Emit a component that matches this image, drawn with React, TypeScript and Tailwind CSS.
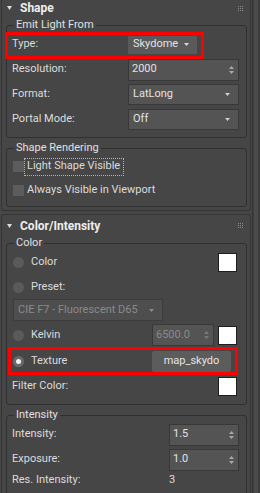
import React from 'react';
import { clsx } from 'clsx';

const Tri = ({ className = '', w = 5, h = 3 }: { className?: string; w?: number; h?: number }) => (
  <svg width={w} height={h} viewBox={`0 0 ${w} ${h}`} className={className}>
    <path d={`M0 0H${w}L${w / 2} ${h}Z`} fill="currentColor" />
  </svg>
);

const SpinArrows = ({ dim = false }: { dim?: boolean }) => (
  <svg width="5" height="8" viewBox="0 0 5 8" className={dim ? 'text-[#7a7a7a]' : 'text-[#a8a8a8]'}>
    <path d="M2.5 0L5 3H0Z M0 5H5L2.5 8Z" fill="currentColor" />
  </svg>
);

const Grip = () => (
  <svg width="5" height="5" viewBox="0 0 5 5" className="text-[#8c8c8c]">
    {[0, 2, 4].flatMap((x) =>
      [0, 2, 4].map((y) => <rect key={`${x}-${y}`} x={x} y={y} width="1" height="1" fill="currentColor" />)
    )}
  </svg>
);

const Spinner = ({ value, className, disabled = false }: { value: string; className?: string; disabled?: boolean }) => (
  <div className={clsx('flex h-[22px] items-center border border-[#383838] bg-[#545454] pl-[3px] pr-[4px]', className)}>
    <span className={clsx('flex-1', disabled ? 'text-[#8a8a8a]' : 'text-[#e2e2e2]')}>{value}</span>
    <SpinArrows dim={disabled} />
  </div>
);

const Dropdown = ({ value, className }: { value: string; className?: string }) => (
  <div className={clsx('flex h-[21px] items-center border border-[#383838] bg-[#545454] pl-[4px] pr-[8px]', className)}>
    <span className="flex-1 text-[#e2e2e2]">{value}</span>
    <Tri className="text-[#cfcfcf]" />
  </div>
);

const Swatch = () => <div className="mr-[2px] h-[19px] w-[19px] border border-[#1e1e1e] bg-white" />;

const Radio = ({ on = false }: { on?: boolean }) => (
  <div
    className={clsx(
      'ml-[1px] flex h-[11px] w-[11px] items-center justify-center rounded-full',
      on ? 'bg-[#6a6a6a]' : 'bg-[#5a5a5a]'
    )}
  >
    {on && <div className="h-[5px] w-[5px] rounded-full bg-[#f2f2f2]" />}
  </div>
);

const Check = () => <div className="ml-[1px] h-[11px] w-[11px] bg-[#5c5c5c]" />;

const RedBox = ({ className }: { className: string }) => (
  <div className={clsx('pointer-events-none absolute border-[3px] border-[#ff0000]', className)} />
);

const Header = ({ title, className }: { title: string; className?: string }) => (
  <div className={clsx('flex items-center pl-[5px] pr-[7px]', className)}>
    <Tri className="text-[#dcdcdc]" h={4} />
    <span className="ml-[8px] text-[12px] font-bold text-[#eeeeee]">{title}</span>
    <span className="ml-auto flex">
      <Grip />
    </span>
  </div>
);

const Group = ({ label, children, className }: { label: string; children: React.ReactNode; className?: string }) => (
  <fieldset className={clsx('ml-[4px] mr-[3px] rounded-[3px] border border-[#303030] pl-[5px] pr-[7px]', className)}>
    <legend className="ml-[2px] px-[2px] leading-[14px] text-[#e0e0e0]">{label}</legend>
    {children}
  </fieldset>
);

export default function App() {
  return (
    <div className="flex h-[493px] w-[260px] overflow-hidden bg-[#464646] font-['Roboto',sans-serif] text-[11px] text-[#dcdcdc]">
      <div className="ml-[1px] flex w-[250px] flex-col">
        {/* Shape rollout, scrolled so its top edge is out of view */}
        <div className="rounded-b-[3px] border border-t-0 border-[#353535]">
          <Header title="Shape" className="h-[16px]" />

          <Group label="Emit Light From" className="mt-[2px] pb-[5px]">
            <div className="relative flex h-[25px] items-center">
              <span className="w-[116px]">Type:</span>
              <div className="flex h-[18px] w-[69px] items-center bg-[#5a5a5a] pl-[5px] pr-[8px]">
                <span className="flex-1 text-[#e2e2e2]">Skydome</span>
                <Tri className="text-[#d8d8d8]" />
              </div>
              <RedBox className="-left-[7px] right-[35px] top-0 -bottom-[2px]" />
            </div>
            <div className="flex h-[25px] items-center">
              <span className="w-[116px]">Resolution:</span>
              <Spinner value="2000" className="flex-1" />
            </div>
            <div className="flex h-[25px] items-center">
              <span className="w-[116px]">Format:</span>
              <Dropdown value="LatLong" className="flex-1" />
            </div>
            <div className="flex h-[25px] items-center">
              <span className="w-[116px]">Portal Mode:</span>
              <Dropdown value="Off" className="flex-1" />
            </div>
          </Group>

          <Group label="Shape Rendering" className="mb-[3px] mt-[3px] pb-[4px]">
            <div className="flex h-[23px] items-center">
              <Check />
              <span className="ml-[0px] flex h-[18px] items-center border border-dotted border-[#b4b4b4] pl-[2px] pr-[3px]">
                Light Shape Visible
              </span>
            </div>
            <div className="flex h-[24px] items-center">
              <Check />
              <span className="ml-[3px]">Always Visible in Viewport</span>
            </div>
          </Group>
        </div>

        {/* Color/Intensity rollout */}
        <div className="mt-[3px] flex-1 rounded-t-[3px] border border-b-0 border-[#353535]">
          <Header title="Color/Intensity" className="h-[21px]" />

          <Group label="Color" className="pb-[5px]">
            <div className="flex h-[25px] items-center">
              <Radio />
              <span className="ml-[7px] flex-1">Color</span>
              <Swatch />
            </div>
            <div className="flex h-[24px] items-center">
              <Radio />
              <span className="ml-[7px]">Preset:</span>
            </div>
            <div className="flex h-[23px] items-start">
              <div className="ml-[1px] flex h-[22px] w-[150px] items-center border border-[#3c3c3c] bg-[#4e4e4e] pl-[4px] pr-[8px]">
                <span className="flex-1 text-[#8a8a8a]">CIE F7 - Fluorescent D65</span>
                <Tri className="text-[#8a8a8a]" />
              </div>
            </div>
            <div className="flex h-[26px] items-center">
              <Radio />
              <span className="ml-[7px] flex-1">Kelvin</span>
              <Spinner value="6500.0" disabled className="mr-[4px] w-[62px]" />
              <Swatch />
            </div>
            <div className="relative flex h-[26px] items-center">
              <Radio on />
              <span className="ml-[7px] flex-1">Texture</span>
              <div className="mr-[8px] flex h-[21px] w-[79px] items-center justify-center rounded-[2px] bg-[#5c5c5c] text-[#e4e4e4]">
                map_skydo
              </div>
              <RedBox className="-left-[4px] right-[1px] -top-[1px] -bottom-[1px]" />
            </div>
            <div className="flex h-[25px] items-center">
              <span className="flex-1">Filter Color:</span>
              <Swatch />
            </div>
          </Group>

          <Group label="Intensity" className="mt-[3px] pb-[5px]">
            <div className="flex h-[25px] items-center">
              <span className="flex-1">Intensity:</span>
              <Spinner value="1.5" className="w-[70px]" />
            </div>
            <div className="flex h-[25px] items-center">
              <span className="flex-1">Exposure:</span>
              <Spinner value="1.0" className="w-[70px]" />
            </div>
            <div className="flex h-[17px] items-center">
              <span className="w-[157px]">Res. Intensity:</span>
              <span>3</span>
            </div>
          </Group>
        </div>
      </div>

      {/* scrollbar strip */}
      <div className="ml-[1px] flex w-[8px] border-l border-[#363636] bg-[#3d3d3d]">
        <div className="mx-[1px] w-[4px] bg-[#4b4b4b]" />
      </div>
    </div>
  );
}
